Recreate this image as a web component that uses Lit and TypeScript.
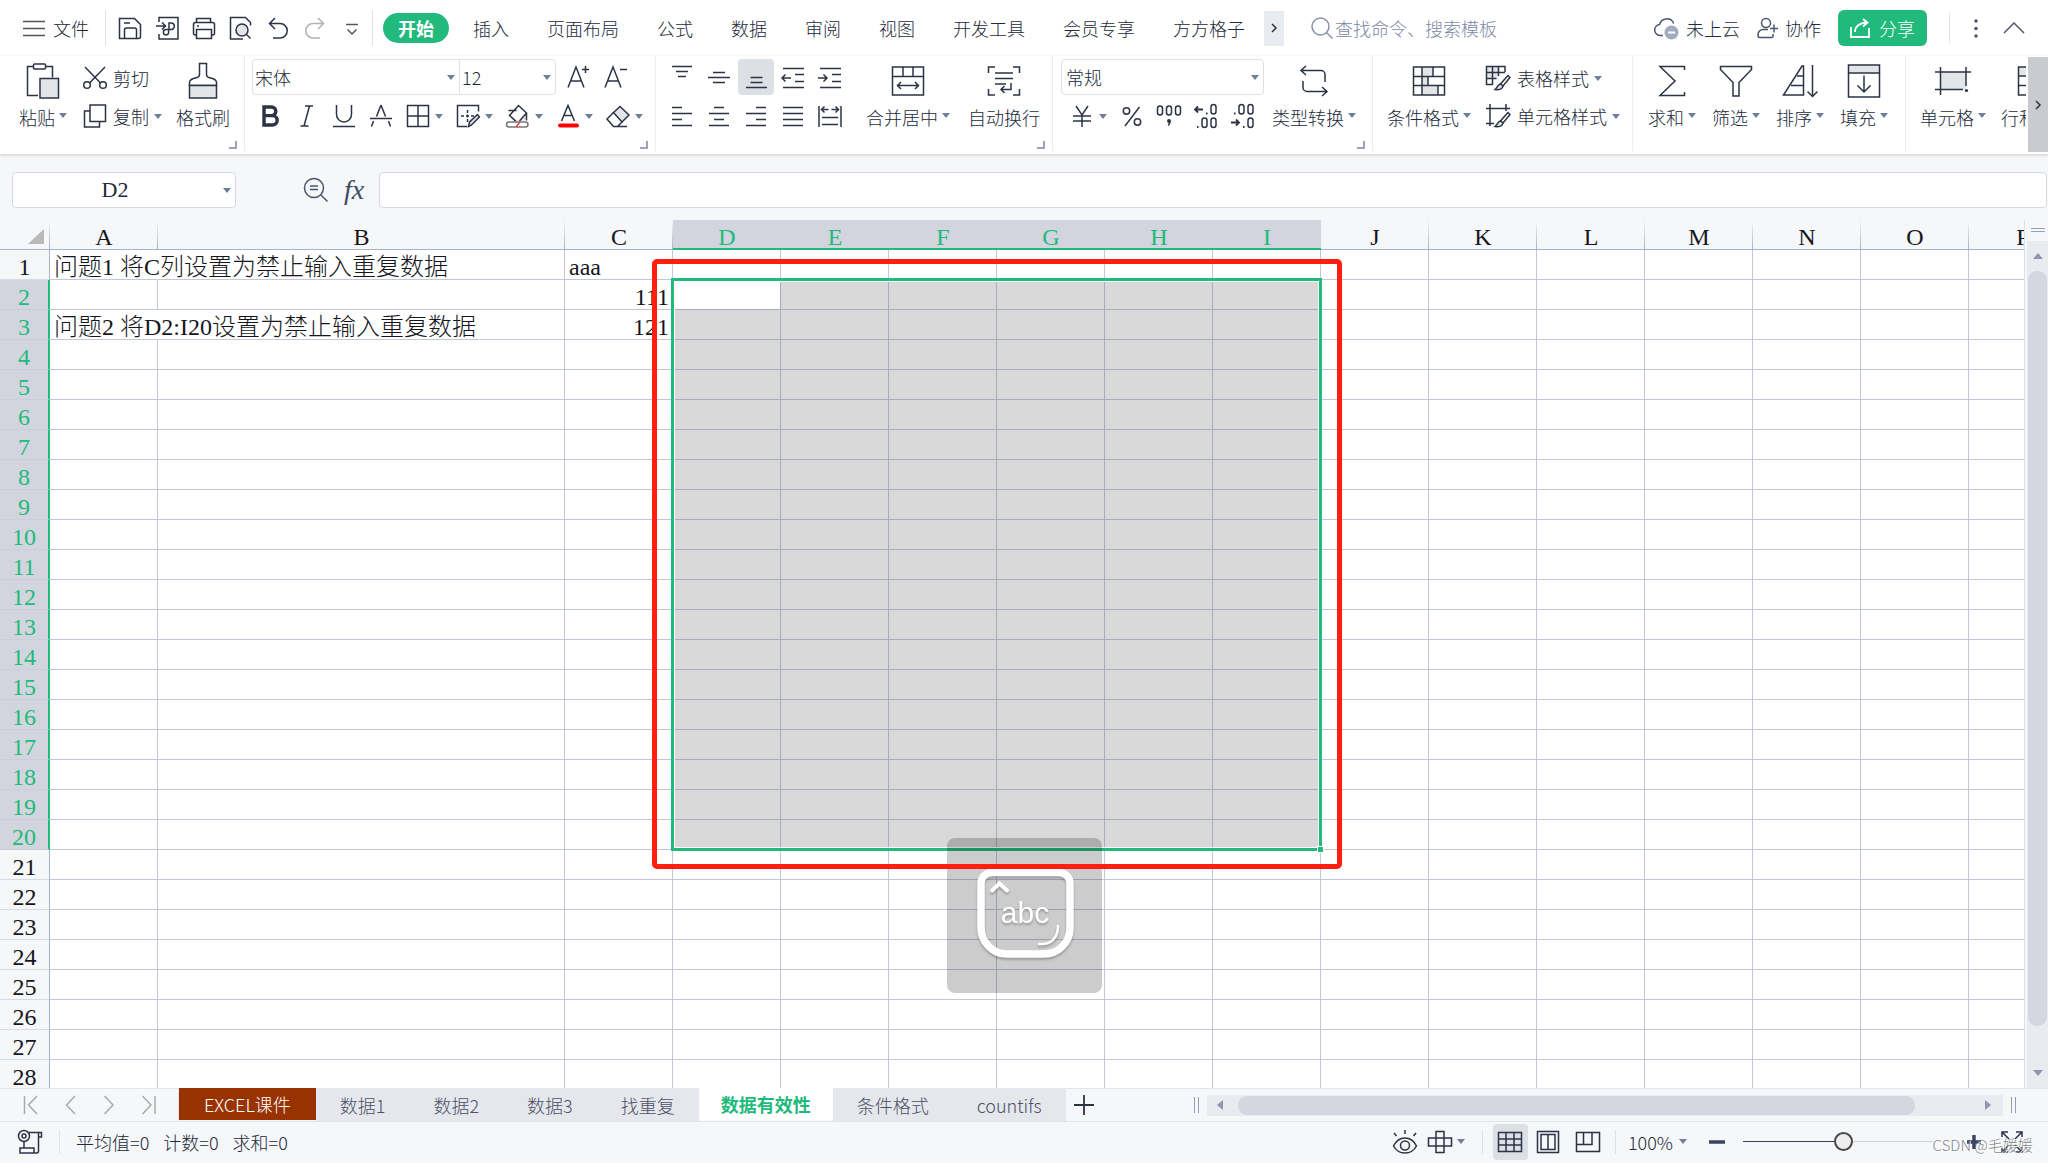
import { LitElement, html, css, svg, nothing, type TemplateResult, type SVGTemplateResult } from "lit";
import { customElement, state } from "lit/decorators.js";
import { classMap } from "lit/directives/class-map.js";
import { styleMap } from "lit/directives/style-map.js";

/** Wraps strokes in an SVG whose view box equals its pixel size. */
const icon = (w: number, h: number, body: SVGTemplateResult, cls = "") =>
  html`<svg class="icon ${cls}" width=${w} height=${h} viewBox="0 0 ${w} ${h}" aria-hidden="true">${body}</svg>`;

const arrow = html`<svg class="arrow" width="8" height="5" viewBox="0 0 8 5" aria-hidden="true"><path d="M0 0h8L4 5z" /></svg>`;

const I = {
  menu: icon(22, 24, svg`<path d="M0 5.5h22M0 12.5h22M0 19.5h22" stroke="#555"/>`),
  save: icon(24, 24, svg`<path d="M1.5 2.5h15l6 6v12a2 2 0 0 1-2 2h-19z"/><path d="M6.5 22v-8a2 2 0 0 1 2-2h8a2 2 0 0 1 2 2v8M6 7h6"/>`),
  exportPdf: icon(24, 24, svg`<path d="M4 6V1.500h19v21.500H4v-5M1 10h9M7 6.500l3.500 3.500L7 13.500"/><path d="M14 13.500V7h2a3.300 3.300 0 0 1 0 6.600h-5a2.600 2.600 0 1 0 2.600 2.600v-2.600"/>`),
  print: icon(24, 24, svg`<path d="M4.500 7V2.500h14V7"/><rect x="1.500" y="6.500" width="21" height="12.500" rx="2"/><rect x="4.500" y="13.500" width="15" height="9" fill="#fff"/><path d="M5 10h2"/>`),
  preview: icon(24, 24, svg`<path d="M14 23H1.500V1.500h15l5 5v3"/><circle cx="13" cy="14" r="6" fill="#e4e5e8"/><path d="M17.500 18.500l4 4"/>`),
  undo: icon(24, 24, svg`<path d="M4 7.500h10a7.200 7.200 0 0 1 0 14.500H7M9 2L3.500 7.500L9 13"/>`),
  redo: icon(24, 24, svg`<path d="M20 7.500H10A7.200 7.200 0 0 0 10 22h7M15 2l5.500 5.500L15 13" stroke="#b3b3b3"/>`),
  more: icon(12, 24, svg`<path d="M0 8.500h12M1.500 13.500L6 18l4.500-4.500" stroke="#555"/>`),
  search: icon(22, 22, svg`<circle cx="9.500" cy="9.500" r="8.500"/><path d="M15.500 15.500l6 6"/>`, "muted"),
  chevron: icon(8, 12, svg`<path d="M2 2l4 4-4 4"/>`),
  cloud: icon(26, 24, svg`<path d="M9 19.500H7A5.500 5.500 0 0 1 5.500 8.500a7.500 7.500 0 0 1 14.200-1"/><circle cx="17.500" cy="16.500" r="7" fill="#a3acbf" stroke="none"/><path d="M14 16.500h7" stroke="#fff" stroke-width="2"/>`, "slate"),
  collab: icon(22, 24, svg`<circle cx="9" cy="7" r="4.500"/><path d="M11 13.500H6a5 5 0 0 0-5 5V20a1.500 1.500 0 0 0 1.500 1.500h12A1.500 1.500 0 0 0 16 20v-2M13 12.500h8M17 8.500v8"/>`, "slate"),
  share: icon(20, 20, svg`<path d="M1 9v10h18v-9M5 14c0-5 4-9 12-9.500M13 1l4.500 3.500L13 8.500" stroke="#fff" stroke-width="1.800"/>`),
  dots: icon(6, 20, svg`<g fill="#4a5266" stroke="none"><circle cx="3" cy="3" r="1.700"/><circle cx="3" cy="10.500" r="1.700"/><circle cx="3" cy="18" r="1.700"/></g>`),
  collapse: icon(22, 14, svg`<path d="M1 12L11 2l10 10" stroke="#4f5768"/>`),

  paste: icon(34, 36, svg`<path d="M12 32.500H1.500v-29H7M20 3.500h6.500v11"/><rect x="7.500" y="1" width="12" height="5" rx="1"/><rect x="14" y="15.500" width="18.500" height="19.500" fill="#e4e5e8"/>`),
  cut: icon(24, 24, svg`<circle cx="4" cy="19" r="3.300"/><circle cx="20" cy="19" r="3.300"/><path d="M2 1l15.500 16M22 1L6.500 17"/>`),
  copy: icon(24, 24, svg`<path d="M7 7H1.500v16h15v-5.500"/><rect x="7" y="1" width="15.500" height="16.500"/>`),
  brush: icon(30, 38, svg`<path d="M1.500 23.500v-3c0-2 1-3 4-4 4-1 6-1.500 6-4V1.500h7v11c0 2.500 2 3 6 4 3 1 4 2 4 4v3z"/><path d="M1.500 23.500v12.500h27V23.500z" fill="#e4e5e8"/>`),
  bold: icon(24, 24, svg`<path d="M6 3h7.500a4.300 4.300 0 0 1 0 8.600H6zM6 11.600h8.500a4.700 4.700 0 0 1 0 9.400H6z" stroke-width="3.400"/>`),
  italic: icon(24, 24, svg`<path d="M10 2h8M5.500 22h8M14.500 2L9 22"/>`),
  underline: icon(24, 24, svg`<path d="M4.500 1v9.500a7 7 0 0 0 15 0V1M1 22.500h22"/>`),
  strike: icon(24, 24, svg`<path d="M12 1L7.500 12.500M12 1l4.500 11.500M4.500 17L2.500 22.500M19.500 17l2 5.500M1 14.500h22"/>`),
  border: icon(24, 24, svg`<path d="M1.500 1.500h21v21h-21zM12 1.500v21M1.500 12h21"/>`),
  borderPen: icon(24, 24, svg`<path d="M11 22.500H1.500v-21h21v6M11.500 6v3M11.500 15v3M5 12h3M15 12h3M10 12h3M11.500 10.500v3"/><path d="M12.500 22.500l1-4.500 8-7.500 2 2.500-8 8z" fill="#dcdee2"/>`),
  fill: icon(26, 24, svg`<path d="M5 10l9 7 8-6.500V15l-4 2.500H9z" fill="#e4e5e8" stroke="none"/><path d="M11 17.500L4.500 11.500 13.500 1.500l8 7.500-7 8M3.500 6.500h8M21.500 9.500v7"/><rect x="1.500" y="18" width="21.500" height="5" rx="2.500" fill="#fff" stroke="#777"/><path d="M11 23l4-5" stroke="#ff3a30"/>`),
  color: icon(24, 24, svg`<path d="M5.500 17L12 1.500 18.500 17M8 11.500h8"/><path d="M4 21.500h17" stroke="#ff0000" stroke-width="4" stroke-linecap="round"/>`),
  eraser: icon(26, 24, svg`<path d="M8.500 8.500L15 2.500l9 8.500-7 7z" fill="#e4e5e8"/><path d="M8.500 8.500L2 15l6.500 7.500h4L17 18M8.500 22.500H22"/>`),
  grow: icon(24, 24, svg`<path d="M1 22.500L9 2l8 20.500M4 16h10M15 4.500h7M18.500 1v7"/>`),
  shrink: icon(24, 24, svg`<path d="M1 22.500L9 2l8 20.500M4 16h10M16 4.500h7"/>`),

  top: icon(24, 24, svg`<path d="M2 1.500h20M6 6.500h12M8 11.500h8"/>`),
  middle: icon(24, 24, svg`<path d="M6 7.500h12M1 12.500h22M6 17.500h12"/>`),
  bottom: icon(24, 24, svg`<path d="M6.500 12.500h12M6.500 17.500h12M2 22.500h21"/>`),
  outdent: icon(24, 24, svg`<path d="M2 3.500h21M14 9.500h9M14 16.500h9M2 22.500h21M1 13h9M4.500 9.500L1 13l3.500 3.500"/>`),
  indent: icon(24, 24, svg`<path d="M2 3.500h21M14 9.500h9M14 16.500h9M2 22.500h21M0 13h9M5.500 9.500L9 13l-3.500 3.500"/>`),
  left: icon(24, 24, svg`<path d="M2 3.500h10M2 9.500h20M2 15.500h10M2 21.500h20"/>`),
  center: icon(24, 24, svg`<path d="M7 3.500h10M2 9.500h20M7 15.500h10M2 21.500h20"/>`),
  right: icon(24, 24, svg`<path d="M12 3.500h10M2 9.500h20M12 15.500h10M2 21.500h20"/>`),
  justify: icon(24, 24, svg`<path d="M2 3.500h20M2 9.500h20M2 15.500h20M2 21.500h20"/>`),
  distribute: icon(24, 24, svg`<path d="M1 2v21M23 2v21M4 13.500h16M4 20.500h16M3.500 5.500h7M13.500 5.500h7M6.500 2.500l-3 3 3 3M17.500 2.500l3 3-3 3"/>`),
  merge: icon(34, 30, svg`<path d="M1.500 1h31v28h-31zM1.500 10.500h31M12 1v9.500M22 1v9.500M6.500 19.500h21M10 16l-3.500 3.500L10 23M24 16l3.500 3.500L24 23"/>`),
  wrap: icon(34, 30, svg`<path d="M1.500 7V1H8M26 1h6.500v6M1.500 23v6H8M26 29h6.500v-6M8 7h18M8 12.500h18M8 18h11M24 17v6.500H14M17.500 20L14 23.500l3.500 3.500"/>`),

  yuan: icon(24, 24, svg`<path d="M6 2l6 9 6-9M12 11v12M3 12h18M3 17h18"/>`),
  percent: icon(24, 24, svg`<circle cx="6.500" cy="7" r="3.200"/><circle cx="17.500" cy="18" r="3.200"/><path d="M19.500 3L5 22"/>`),
  thousands: icon(26, 24, svg`<rect x="1.500" y="2" width="5" height="9" rx="2.500"/><rect x="10.500" y="2" width="5" height="9" rx="2.500"/><rect x="19.500" y="2" width="5" height="9" rx="2.500"/><circle cx="13" cy="17" r="1.200" fill="#2b3345"/><path d="M14 17c0 2-.5 3.500-2 4.500"/>`),
  decInc: icon(26, 26, svg`<path d="M2 6.500h8M5 3.500L2 6.500l3 3M13 10.500h1.500M4 24h1.500" stroke-width="1.800"/><rect x="18" y="1.500" width="5" height="9.500" rx="2.500"/><rect x="9" y="15" width="5" height="9.500" rx="2.500"/><rect x="18" y="15" width="5" height="9.500" rx="2.500"/>`),
  decDec: icon(26, 26, svg`<path d="M1 19.500h8M6 16.500l3 3-3 3M13 24h1.500M4 10.500h1.500" stroke-width="1.800"/><rect x="18" y="1.500" width="5" height="9.500" rx="2.500"/><rect x="9" y="1.500" width="5" height="9.500" rx="2.500"/><rect x="18" y="15" width="5" height="9.500" rx="2.500"/>`),
  convert: icon(30, 32, svg`<path d="M2 5.500h20a4 4 0 0 1 4 4V17M7 1L2 5.500 7 10M4 16v6.500a4 4 0 0 0 4 4h20M23 22l5 4.500L23 31"/>`),
  cond: icon(34, 30, svg`<path d="M11 1h10v9.500H11zM10 10.500h6v9h-6zM11 19.500h14V29H11z" fill="#e4e5e8" stroke="none"/><path d="M1.500 1h31v28h-31zM1.500 10.500h31M1.500 19.500h31M10 1v28M21 1v9.500M16 10.500v9M26 19.500V29"/>`),
  tableStyle: icon(26, 26, svg`<path d="M1.500 1.500h12v12h-12z" fill="#e4e5e8" stroke="none"/><path d="M20 7V1.500H1.500v18H8M1.500 7.500H20M1.500 13.500h10M7.500 1.500v18M13.500 1.500V11"/><path d="M23 10.500l-7.500 8.500 2.500 2 7-8.500z" fill="#fff"/><path d="M15.500 19c-3 .5-3 3.500-5.500 5.500 4 .5 7.500-.5 8-3.500z" fill="#dcdee2"/>`),
  cellStyle: icon(26, 26, svg`<path d="M1 5.500h24M5 1v22M1 20.500h8M21 1v7"/><path d="M23 9.500l-7.500 8.500 2.500 2 7-8.500z" fill="#fff"/><path d="M15.500 18c-3 .5-3 3.500-5.500 5.500 4 .5 7.500-.5 8-3.500z" fill="#dcdee2"/>`),
  sum: icon(28, 32, svg`<path d="M26.500 5V1.500H2L17 16 2 30.500h24.500V27"/>`),
  filter: icon(34, 32, svg`<path d="M1.500 1.500h31v3L20 17.500V31h-6V17.500L1.500 4.500z"/>`),
  sort: icon(36, 34, svg`<path d="M20 2h1.500v29H1.500zM15 12h6.500M9 21.500h12.500M30.500 1v32M25.500 27.500l5 5 5-5"/>`),
  fillDown: icon(34, 34, svg`<path d="M1.500 1h31v8h-31z" fill="#e4e5e8"/><path d="M1.500 9v24h31V9M17 11.500V28M10.500 21.500L17 28l6.500-6.500"/>`),
  cell: icon(36, 30, svg`<rect x="6" y="6" width="25" height="17.500" fill="#e4e5e8" stroke="none"/><path d="M0 6h36M0 23.500h28M5.500 1v28M31 1v19"/><circle cx="31.500" cy="24.500" r="1.600" fill="#2b3345" stroke="none"/>`),
  rowcol: icon(34, 30, svg`<rect x="1.500" y="1" width="31" height="9" fill="#e4e5e8" stroke="none"/><path d="M1.500 1h31v28h-31zM1.500 10h31M1.500 19.500h31"/>`),

  zoomEq: icon(26, 26, svg`<circle cx="11" cy="11" r="9.500"/><path d="M18 18l6.500 6.500M7 9h8M7 12.500h8"/>`, "steel"),
  first: icon(16, 20, svg`<path d="M1.500 1v18M14 1L5.500 10l8.500 9" stroke="#aaa"/>`),
  prev: icon(12, 20, svg`<path d="M10 1L1.500 10l8.500 9" stroke="#aaa"/>`),
  next: icon(12, 20, svg`<path d="M1.500 1L10 10l-8.500 9" stroke="#aaa"/>`),
  last: icon(16, 20, svg`<path d="M1.500 1L10 10l-8.500 9M14 1v18" stroke="#aaa"/>`),
  plus: icon(20, 20, svg`<path d="M0 10h20M10 0v20" stroke-width="1.800"/>`),
  record: icon(26, 26, svg`<circle cx="7" cy="7" r="5.500"/><circle cx="7" cy="7" r="2"/><path d="M7 12.500V19M12 3.500h9.500V22M21.500 3.500h3V8h-3M3 19h14v5H3zM17 24h2.500a2 2 0 0 0 2-2"/>`),
  eye: icon(26, 24, svg`<path d="M1.500 16C4 11 8 8 13 8s9 3 11.500 8c-2.500 4.500-6.500 7-11.500 7s-9-2.500-11.500-7z"/><circle cx="13" cy="15.500" r="4.500"/><path d="M13 0v4M2 3l2.500 3M24 3l-2.500 3"/>`),
  cross: icon(26, 24, svg`<path d="M9 1.500h8v21H9zM1.500 8h23v8h-23zM9 8v8M17 8v8" />`),
  grid: icon(26, 22, svg`<path d="M1.500 1.500h23v19h-23zM1.500 8h23M1.500 14h23M9 1.500v19M17 1.500v19"/>`),
  page: icon(24, 24, svg`<rect x="1.500" y="1.500" width="21" height="21"/><path d="M5 4.500h14v15H5zM12 4.500v15"/>`),
  breaks: icon(26, 22, svg`<path d="M1.500 1.500h23v19h-23zM8.500 1.500v12h8.500v-12M1.500 13.500h7M17 8v5.500" />`),
  full: icon(24, 24, svg`<path d="M8 2H2v5M2 2l7 7M16 2h6v5M22 2l-7 7M8 22H2v-5M2 22l7-7M16 22h6v-5M22 22l-7-7"/>`),
};

type Col = { name: string; width: number };
const ROW_HEADER_WIDTH = 50;
const COLUMNS: Col[] = "ABCDEFGHIJKLMNOP".split("").map((name) => ({ name, width: name === "B" ? 407 : 108 }));
const TABLE_WIDTH = COLUMNS.reduce((sum, c) => sum + c.width, ROW_HEADER_WIDTH);
const ROW_COUNT = 28;
const SELECTED = { first: "D", last: "I", top: 2, bottom: 20 };
const CELLS: Record<string, string | number> = {
  A1: "问题1 将C列设置为禁止输入重复数据",
  A3: "问题2 将D2:I20设置为禁止输入重复数据",
  C1: "aaa",
  C2: 111,
  C3: 121,
};

const MENU_TABS = ["开始", "插入", "页面布局", "公式", "数据", "审阅", "视图", "开发工具", "会员专享", "方方格子"];
const SHEETS = ["EXCEL课件", "数据1", "数据2", "数据3", "找重复", "数据有效性", "条件格式", "countifs"];

@customElement("sheet-grid")
class SheetGrid extends LitElement {
  static styles = css`
    :host { display: block; position: relative; overflow: hidden; flex: 1; min-width: 0; background: #fff; }
    table { border-collapse: separate; border-spacing: 0; table-layout: fixed; font: 24px/29px "Liberation Serif", "Noto Sans CJK SC", serif; color: #14161c; }
    tr { height: 30px; }
    th, td { box-sizing: border-box; height: 30px; padding: 0; font-weight: 300; white-space: nowrap; border: 0 solid #c1c7d9; border-width: 0 1px 1px 0; }
    thead th { background: #f5f7f9; border-bottom-color: #a9b1c6; border-right: 0; line-height: 23px; vertical-align: bottom; background-image: linear-gradient(#f5f7f9, #a9b1c6); background-size: 1px 100%; background-position: right; background-repeat: no-repeat; }
    thead th.on { background: #d2d5dd; color: #21ba7c; border-bottom: 2px solid #21ba7c; line-height: 21px; }
    tbody th { background: #f5f7f9; border-right-color: #a9b1c6; border-bottom-color: #d6dae4; text-align: center; }
    tbody th.on { background: #d2d5dd; color: #21ba7c; border-right: 2px solid #21ba7c; border-bottom-color: #c9cedb; }
    .corner svg { display: block; margin: 0 6px 5px auto; fill: #b9b9b9; }
    td { padding: 0 4px; overflow: visible; }
    td.num { text-align: right; padding: 0 3px; }
    td.spill { border-right-color: transparent; }
    td.area { background: #d9d9d9; border-color: #a7adbd; }
    td.active { background: #fff; }
    .text { display: block; height: 29px; line-height: 35px; overflow: visible; }
    .selection { position: absolute; left: 671px; top: 58px; width: 651px; height: 573px; box-sizing: border-box; border: 3px solid #21ba7c; box-shadow: inset 0 0 0 1px #fff; }
    .handle { position: absolute; right: -5px; bottom: -5px; width: 5px; height: 5px; background: #21ba7c; border: 1px solid #fff; }
    .callout { position: absolute; left: 652px; top: 39px; width: 690px; height: 610px; box-sizing: border-box; border: 5px solid #ff1e10; border-radius: 5px; }
    .ime { position: absolute; left: 947px; top: 618px; width: 155px; height: 155px; border-radius: 8px; background: rgba(0, 0, 0, 0.2); }
    .ime svg { display: block; }
    .ime text { font: 30px "Liberation Sans", Arial, sans-serif; fill: #fff; }
    .shade { filter: drop-shadow(0 2px 1px rgba(0, 0, 0, 0.25)); }
  `;

  private cell(col: Col, row: number) {
    const value = CELLS[col.name + row];
    const inArea = col.name >= SELECTED.first && col.name <= SELECTED.last && row >= SELECTED.top && row <= SELECTED.bottom;
    const classes = {
      num: typeof value === "number",
      spill: col.name === "A" && value !== undefined,
      area: inArea,
      active: inArea && col.name === SELECTED.first && row === SELECTED.top,
    };
    return html`<td class=${classMap(classes)}>${value === undefined ? nothing : html`<span class="text">${value}</span>`}</td>`;
  }

  render() {
    const rows = Array.from({ length: ROW_COUNT }, (_, i) => i + 1);
    return html`
      <table style=${styleMap({ width: `${TABLE_WIDTH}px` })}>
        <colgroup>
          <col style=${styleMap({ width: `${ROW_HEADER_WIDTH}px` })} />
          ${COLUMNS.map((c) => html`<col style=${styleMap({ width: `${c.width}px` })} />`)}
        </colgroup>
        <thead>
          <tr>
            <th class="corner"><svg width="16" height="15" viewBox="0 0 16 15" aria-hidden="true"><path d="M16 0v15H0z" /></svg></th>
            ${COLUMNS.map((c) => html`<th scope="col" class=${classMap({ on: c.name >= SELECTED.first && c.name <= SELECTED.last })}>${c.name}</th>`)}
          </tr>
        </thead>
        <tbody>
          ${rows.map((r) => html`<tr>
            <th scope="row" class=${classMap({ on: r >= SELECTED.top && r <= SELECTED.bottom })}><span class="text">${r}</span></th>
            ${COLUMNS.map((c) => this.cell(c, r))}
          </tr>`)}
        </tbody>
      </table>
      <div class="selection"><div class="handle"></div></div>
      <div class="ime">
        <svg width="155" height="155" viewBox="0 0 155 155">
          <g class="shade" fill="none" stroke="#fff">
            <path d="M45 34.500H112a11 11 0 0 1 11 11V90a26 26 0 0 1-26 26H60a26 26 0 0 1-26-26V45.500a11 11 0 0 1 11-11z" stroke-width="7.500" />
            <path d="M45 52.500l7.500-7 7.500 7" stroke-width="4" stroke-linecap="round" />
            <path d="M92 106c12 1 19-6 19-18" stroke-width="2.500" stroke-linecap="round" />
          </g>
          <text class="shade" x="78" y="85" text-anchor="middle">abc</text>
        </svg>
      </div>
      <div class="callout"></div>
    `;
  }
}

@customElement("app-root")
class AppRoot extends LitElement {
  @state() private menu = "开始";
  @state() private sheet = "数据有效性";

  static styles = css`
    :host { display: flex; flex-direction: column; height: 100vh; overflow: hidden; background: #f5f7f9; color: #22293a; font: 300 18px/24px "Noto Sans CJK SC", sans-serif; }
    button, input, select { font: inherit; color: inherit; background: none; border: 0; padding: 0; margin: 0; white-space: nowrap; }
    button { display: flex; align-items: center; justify-content: center; flex: none; }
    .icon { display: block; flex: none; fill: none; stroke: #2b3345; stroke-width: 1.5; }
    .icon.muted { stroke: #8792ad; }
    .icon.slate, .icon.steel { stroke: #4a556e; }
    .arrow { display: block; flex: none; fill: #6f7e9c; }

    .top { display: flex; align-items: center; height: 56px; flex: none; padding: 0 23px; box-sizing: border-box; background: #fff; overflow: hidden; }
    .file { gap: 8px; }
    .bar { width: 1px; height: 36px; background: #dfe1e5; flex: none; }
    .quick { display: flex; gap: 13px; padding: 0 14px 0 12px; margin-left: 16px; border: solid #dfe1e5; border-width: 0 1px; height: 36px; }
    .quick .more { margin-left: 6px; }
    .tabs { display: flex; align-items: center; padding-left: 10px; }
    .tabs button { padding: 0 19px; height: 30px; }
    .tabs .current { background: #21ba7c; color: #fff; font-weight: 700; border-radius: 15px; padding: 0 15px; margin-right: 5px; }
    .scroll-tabs { width: 20px; height: 35px; background: #e8ebf0; }
    .search { display: flex; align-items: center; gap: 2px; margin-left: 27px; }
    .search input { width: 170px; color: #7c88a5; }
    .search input::placeholder { color: #7c88a5; opacity: 1; }
    .account { display: flex; align-items: center; margin-left: auto; gap: 17px; }
    .account button { gap: 6px; }
    .account .share { background: #21ba7c; color: #fff; border-radius: 6px; height: 36px; padding: 0 12px; gap: 9px; }
    .account .bar { height: 30px; margin: 0 6px 0 5px; }
    .account .collapse { margin-left: 7px; }

    .ribbon { display: flex; flex: none; height: 98px; background: #fff; box-shadow: 0 1px 3px rgba(0, 0, 0, 0.18); position: relative; }
    .groups { display: flex; flex: 1; min-width: 0; overflow: hidden; margin-right: 2px; }
    .group { display: flex; position: relative; flex: none; box-sizing: border-box; height: 95px; padding: 3px 0 0; border-right: 1px solid #eceef1; }
    .group:last-child { border-right: 0; }
    .corner-mark { position: absolute; right: 7px; bottom: 2px; width: 6px; height: 6px; border: solid #99a3bd; border-width: 0 2px 2px 0; }
    .clipboard { padding-left: 19px; padding-right: 14px; }
    .font { padding-left: 7px; padding-right: 6px; }
    .align { padding-left: 8px; padding-right: 12px; }
    .number { padding-left: 8px; padding-right: 16px; }
    .styles { padding-left: 14px; padding-right: 12px; }
    .edit { padding-left: 15px; padding-right: 17px; gap: 16px; }
    .cells { padding-left: 14px; gap: 15px; }
    .big { display: grid; grid-template-rows: 36px 36px; justify-items: center; align-content: start; padding-top: 4px; align-items: center; }
    .label { display: flex; gap: 4px; align-items: center; }
    .label .arrow { margin-bottom: 4px; }
    .rows { display: flex; flex-direction: column; gap: 3px; }
    .row { display: flex; gap: 1px; height: 36px; }
    .row.mid { justify-content: center; }
    .tool { width: 36px; height: 36px; border-radius: 4px; }
    .tool.drop { width: 49px; gap: 5px; }
    .tool.drop .icon { margin: 0 -1px; }
    .tool.drop .icon[width="24"] { margin: 0; }
    .tool.pressed { background: #dce0e5; }
    .line { gap: 6px; height: 38px; justify-content: flex-start; }
    .line .arrow { margin-left: -1px; }
    .lines { display: flex; flex-direction: column; }
    .select { position: relative; display: flex; align-items: center; height: 36px; box-sizing: border-box; border: 1px solid #dfe1e5; border-radius: 4px; flex: none; }
    .select select { appearance: none; width: 100%; height: 34px; padding-left: 2px; }
    .select .arrow { position: absolute; right: 4px; pointer-events: none; }
    .select.family { width: 207px; border-right: 0; border-radius: 4px 0 0 4px; }
    .select.size { width: 97px; border-radius: 0 4px 4px 0; margin-right: 4px; margin-left: -1px; }
    .select.format { width: 203px; }
    .select.format select { padding-left: 4px; }
    .clipboard .lines { margin-left: 16px; width: 80px; }
    .clipboard .brush { margin-left: 13px; }
    .align .rows { margin-right: 18px; }
    .align .wrap { margin-left: 18px; }
    .number .rows { margin-right: 8px; }
    .styles .lines { margin-left: 14px; }
    .more-ribbon { width: 20px; height: 95px; margin-top: 1px; background: #c9cbd0; }

    .formula { display: flex; align-items: center; flex: none; height: 36px; padding: 18px 0 12px 12px; }
    .name { position: relative; display: flex; align-items: center; width: 224px; height: 36px; }
    .name input { width: 100%; height: 36px; box-sizing: border-box; padding-right: 18px; text-align: center; background: #fff; border: 1px solid #d6d9e0; border-radius: 4px; font: 22px "Liberation Serif", serif; }
    .name .arrow { position: absolute; right: 5px; }
    .zoom-eq { margin-left: 67px; }
    .fx { margin: 0 12px 0 12px; width: 26px; height: 36px; font: italic 28px/32px "Liberation Serif", serif; color: #3f4a63; }
    .formula .content { flex: 1; min-width: 0; height: 36px; box-sizing: border-box; background: #fff; border: 1px solid #d6d9e0; border-radius: 4px; margin-right: 1px; padding: 0 8px; }

    .work { display: flex; flex: 1; min-height: 0; }
    .vscroll { display: flex; flex-direction: column; align-items: center; width: 24px; box-sizing: border-box; border-left: 1px solid #dde1e8; padding-left: 2px; flex: none; }
    .split-h { width: 14px; height: 2px; border: solid #93a0bb; border-width: 1px 0; margin: 8px 0 9px; flex: none; }
    .vtrack { flex: 1; width: 21px; background: #e9ebf0; display: flex; flex-direction: column; align-items: center; box-sizing: border-box; padding: 12px 0; }
    .vthumb { width: 19px; flex: 1; margin: 12px 0 44px; border-radius: 9px; background: #d4d7df; }
    .tri { fill: #8c98b3; display: block; flex: none; }

    .sheets { display: flex; flex: none; height: 34px; box-sizing: border-box; border: solid #e2e5ea; border-width: 1px 0; align-items: stretch; }
    .nav { display: flex; align-items: center; gap: 26px; padding: 0 21px 0 23px; border-right: 1px solid #e2e5ea; }
    .sheet { padding: 0 24px; background: #e6e7ed; color: #4a5266; margin-top: -1px; }
    .sheet.tinted { background: #983200; color: #fff; margin-bottom: 1px; padding: 0 25px; }
    .sheet.shown { background: #fff; color: #21ba7c; font-weight: 700; margin-bottom: 1px; padding: 0 22px; }
    .add { width: 36px; margin-right: 92px; }
    .split-v { width: 3px; height: 16px; border: solid #93a0bb; border-width: 0 1px; align-self: center; flex: none; }
    .htrack { flex: 1; display: flex; align-items: center; height: 21px; margin: 0 8px; padding: 0 12px 0 10px; background: #e9ebf0; align-self: center; }
    .hthumb { flex: 1; height: 19px; margin: 0 70px 0 15px; border-radius: 9px; background: #d4d7df; }
    .sheets .end { margin-right: 32px; }

    .status { position: relative; display: flex; align-items: center; flex: none; box-sizing: border-box; height: 41px; padding: 0 24px 2px 17px; }
    .stats { display: flex; gap: 14px; margin-left: 16px; padding-left: 16px; border-left: 1px solid #e0e3e8; height: 24px; }
    .view { display: flex; align-items: center; margin-left: auto; }
    .view .bar { height: 24px; }
    .eye { margin-right: 9px; }
    .guides { gap: 4px; margin-right: 17px; }
    .mode { width: 35px; height: 36px; border-radius: 4px; margin: 0 2px 0 1px; }
    .mode.pressed { background: #dce0e5; margin-left: 10px; }
    .mode.last { margin-left: 3px; margin-right: 9px; }
    .percent { gap: 6px; margin: 0 22px 0 12px; }
    .step { width: 16px; height: 20px; }
    .step .icon { stroke: #3a4562; stroke-width: 3.5; }
    .zoom { appearance: none; width: 190px; height: 20px; margin: 0 33px 0 18px; background: linear-gradient(#3a4562, #3a4562) left / 53% 1px no-repeat, linear-gradient(#ced3de, #ced3de) center / 100% 1px no-repeat; }
    .zoom::-webkit-slider-thumb { appearance: none; width: 19px; height: 19px; border-radius: 50%; border: 2px solid #484848; background: #eee; box-sizing: border-box; }
    .fullscreen { margin-left: 18px; }
    .watermark { position: absolute; right: 15px; bottom: 8px; font-size: 15px; line-height: 20px; color: rgba(110, 112, 118, 0.85); text-shadow: 1px 1px 0 #fff; pointer-events: none; }
  `;

  private big(glyph: TemplateResult, label: string, drop = true, cls = "") {
    return html`<button class="big ${cls}">${glyph}<span class="label">${label}${drop ? arrow : nothing}</span></button>`;
  }

  private tool(glyph: TemplateResult, label: string, drop = false, pressed = false) {
    return html`<button class=${classMap({ tool: true, drop, pressed })} aria-label=${label}>${glyph}${drop ? arrow : nothing}</button>`;
  }

  private line(glyph: TemplateResult, label: string, drop = true) {
    return html`<button class="line">${glyph}<span>${label}</span>${drop ? arrow : nothing}</button>`;
  }

  private select(cls: string, label: string, value: string) {
    return html`<div class="select ${cls}"><select aria-label=${label}><option>${value}</option></select>${arrow}</div>`;
  }

  private renderTop() {
    return html`<header class="top">
      <button class="file">${I.menu}<span>文件</span></button>
      <div class="quick">
        ${[["保存", I.save], ["输出为PDF", I.exportPdf], ["打印", I.print], ["打印预览", I.preview], ["撤销", I.undo], ["恢复", I.redo]].map(
          ([label, glyph]) => html`<button aria-label=${label as string}>${glyph}</button>`
        )}
        <button class="more" aria-label="更多">${I.more}</button>
      </div>
      <nav class="tabs">
        ${MENU_TABS.map((t) => html`<button class=${classMap({ current: t === this.menu })} @click=${() => (this.menu = t)}>${t}</button>`)}
      </nav>
      <button class="scroll-tabs" aria-label="更多选项卡">${I.chevron}</button>
      <label class="search">${I.search}<input type="text" aria-label="查找" placeholder="查找命令、搜索模板" /></label>
      <div class="account">
        <button>${I.cloud}<span>未上云</span></button>
        <button>${I.collab}<span>协作</span></button>
        <button class="share">${I.share}<span>分享</span></button>
        <div class="bar"></div>
        <button aria-label="选项">${I.dots}</button>
        <button class="collapse" aria-label="折叠功能区">${I.collapse}</button>
      </div>
    </header>`;
  }

  private renderRibbon() {
    return html`<section class="ribbon">
      <div class="groups">
        <div class="group clipboard">
          ${this.big(I.paste, "粘贴")}
          <div class="lines">${this.line(I.cut, "剪切", false)}${this.line(I.copy, "复制")}</div>
          ${this.big(I.brush, "格式刷", false, "brush")}
          <span class="corner-mark"></span>
        </div>
        <div class="group font">
          <div class="rows">
            <div class="row">
              ${this.select("family", "字体", "宋体")}${this.select("size", "字号", "12")}
              ${this.tool(I.grow, "增大字号")}${this.tool(I.shrink, "减小字号")}
            </div>
            <div class="row">
              ${this.tool(I.bold, "加粗")}${this.tool(I.italic, "倾斜")}${this.tool(I.underline, "下划线")}${this.tool(I.strike, "删除线")}
              ${this.tool(I.border, "边框", true)}${this.tool(I.borderPen, "绘图边框", true)}${this.tool(I.fill, "填充颜色", true)}
              ${this.tool(I.color, "字体颜色", true)}${this.tool(I.eraser, "清除", true)}
            </div>
          </div>
          <span class="corner-mark"></span>
        </div>
        <div class="group align">
          <div class="rows">
            <div class="row">
              ${this.tool(I.top, "顶端对齐")}${this.tool(I.middle, "垂直居中")}${this.tool(I.bottom, "底端对齐", false, true)}
              ${this.tool(I.outdent, "减少缩进量")}${this.tool(I.indent, "增加缩进量")}
            </div>
            <div class="row">
              ${this.tool(I.left, "左对齐")}${this.tool(I.center, "水平居中")}${this.tool(I.right, "右对齐")}
              ${this.tool(I.justify, "两端对齐")}${this.tool(I.distribute, "分散对齐")}
            </div>
          </div>
          ${this.big(I.merge, "合并居中")}${this.big(I.wrap, "自动换行", false, "wrap")}
          <span class="corner-mark"></span>
        </div>
        <div class="group number">
          <div class="rows">
            <div class="row">${this.select("format", "数字格式", "常规")}</div>
            <div class="row mid">
              ${this.tool(I.yuan, "货币", true)}${this.tool(I.percent, "百分比")}${this.tool(I.thousands, "千位分隔")}
              ${this.tool(I.decInc, "增加小数位")}${this.tool(I.decDec, "减少小数位")}
            </div>
          </div>
          ${this.big(I.convert, "类型转换")}
          <span class="corner-mark"></span>
        </div>
        <div class="group styles">
          ${this.big(I.cond, "条件格式")}
          <div class="lines">${this.line(I.tableStyle, "表格样式")}${this.line(I.cellStyle, "单元格样式")}</div>
        </div>
        <div class="group edit">
          ${this.big(I.sum, "求和")}${this.big(I.filter, "筛选")}${this.big(I.sort, "排序")}${this.big(I.fillDown, "填充")}
        </div>
        <div class="group cells">${this.big(I.cell, "单元格")}${this.big(I.rowcol, "行和列")}</div>
      </div>
      <button class="more-ribbon" aria-label="向右滚动">${I.chevron}</button>
    </section>`;
  }

  private renderBottom() {
    return html`
      <div class="sheets">
        <div class="nav">
          <button aria-label="第一张">${I.first}</button><button aria-label="上一张">${I.prev}</button>
          <button aria-label="下一张">${I.next}</button><button aria-label="最后一张">${I.last}</button>
        </div>
        ${SHEETS.map((s, i) => html`<button class=${classMap({ sheet: true, tinted: i === 0, shown: s === this.sheet })} @click=${() => (this.sheet = s)}>${s}</button>`)}
        <button class="add" aria-label="新建工作表">${I.plus}</button>
        <span class="split-v"></span>
        <div class="htrack">
          <svg class="tri" width="6" height="10" viewBox="0 0 6 10"><path d="M6 0v10L0 5z" /></svg>
          <div class="hthumb"></div>
          <svg class="tri" width="6" height="10" viewBox="0 0 6 10"><path d="M0 0v10l6-5z" /></svg>
        </div>
        <span class="split-v end"></span>
      </div>
      <footer class="status">
        <button aria-label="录制宏">${I.record}</button>
        <div class="stats"><span>平均值=0</span><span>计数=0</span><span>求和=0</span></div>
        <div class="view">
          <button class="eye" aria-label="护眼模式">${I.eye}</button>
          <button class="guides" aria-label="阅读模式">${I.cross}${arrow}</button>
          <div class="bar"></div>
          <button class="mode pressed" aria-label="普通视图">${I.grid}</button>
          <button class="mode" aria-label="页面布局">${I.page}</button>
          <button class="mode last" aria-label="分页预览">${I.breaks}</button>
          <div class="bar"></div>
          <button class="percent"><span>100%</span>${arrow}</button>
          <button class="step" aria-label="缩小">${icon(16, 16, svg`<path d="M0 8h16"/>`)}</button>
          <input class="zoom" type="range" min="10" max="190" value="106" aria-label="缩放" />
          <button class="step" aria-label="放大">${icon(16, 16, svg`<path d="M1 8h14M8 1v14"/>`)}</button>
          <button class="fullscreen" aria-label="全屏">${I.full}</button>
        </div>
        <span class="watermark">CSDN @毛媛媛</span>
      </footer>
    `;
  }

  render() {
    return html`
      ${this.renderTop()}${this.renderRibbon()}
      <div class="formula">
        <div class="name"><input type="text" aria-label="名称框" value="D2" />${arrow}</div>
        <button class="zoom-eq" aria-label="查找公式">${I.zoomEq}</button>
        <button class="fx" aria-label="插入函数">fx</button>
        <input class="content" type="text" aria-label="编辑栏" />
      </div>
      <main class="work">
        <sheet-grid></sheet-grid>
        <div class="vscroll">
          <span class="split-h"></span>
          <div class="vtrack">
            <svg class="tri" width="10" height="6" viewBox="0 0 10 6"><path d="M5 0l5 6H0z" /></svg>
            <div class="vthumb"></div>
            <svg class="tri" width="10" height="6" viewBox="0 0 10 6"><path d="M0 0h10L5 6z" /></svg>
          </div>
        </div>
      </main>
      ${this.renderBottom()}
    `;
  }
}
